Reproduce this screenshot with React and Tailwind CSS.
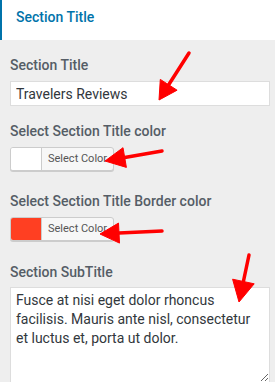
import React from 'react';

const arrows = [
  { tail: [189, 53], base: [168.7, 84.8], head: '159,100 177.1,90.2 160.3,79.4' },
  { tail: [162, 151], base: [124.7, 157.5], head: '105,161 126.4,167.4 123,147.7' },
  { tail: [162, 231], base: [119, 233.1], head: '100,234 119.5,243.1 118.5,223.1' },
  { tail: [249, 255], base: [243.4, 281.5], head: '239,302 254.2,283.8 232.6,279.2' },
];

function ColorButton({ swatch }) {
  return (
    <button
      type="button"
      className="flex h-[24px] w-[104px] items-stretch overflow-hidden rounded-[3px] border border-[#cccccc] bg-[#f7f7f7] shadow-[0_1px_0_#cccccc]"
    >
      <span className={`w-[31px] border-r border-[#cccccc] ${swatch}`} />
      <span className="flex flex-1 items-center pl-[6px] text-[11px] text-[#555555]">Select Color</span>
    </button>
  );
}

function Label({ children }) {
  return <p className="text-[14px] leading-[20px] font-medium text-[#555d66]">{children}</p>;
}

export default function App() {
  return (
    <div className="relative h-[382px] w-[275px] overflow-hidden bg-[#eeeeee] font-['Roboto',sans-serif]">
      {/* Section header */}
      <div className="h-[40px] border-l-2 border-[#0073aa] bg-white pl-[14px] pt-[7px]">
        <h3 className="text-[14px] leading-[20px] font-medium text-[#0073aa]">Section Title</h3>
      </div>

      <div className="pl-[10px] pr-[5px] pt-[15px]">
        <Label>Section Title</Label>
        <input
          type="text"
          defaultValue="Travelers Reviews"
          className="mt-[6px] block h-[25px] w-full border border-[#dddddd] bg-white px-[5px] text-[14px] text-[#32373c] outline-none"
        />

        <div className="mt-[15px]">
          <Label>Select Section Title color</Label>
          <div className="mt-[6px]">
            <ColorButton swatch="bg-white" />
          </div>
        </div>

        <div className="mt-[20px]">
          <Label>Select Section Title Border color</Label>
          <div className="mt-[6px]">
            <ColorButton swatch="bg-[#ff3f22]" />
          </div>
        </div>

        <div className="mt-[21px]">
          <Label>Section SubTitle</Label>
          <textarea
            defaultValue="Fusce at nisi eget dolor rhoncus facilisis. Mauris ante nisl, consectetur et luctus et, porta ut dolor."
            className="mt-[5px] block h-[96px] w-full resize-y border border-[#dddddd] bg-white px-[5px] py-[3px] text-[14px] leading-[19px] text-[#32373c] outline-none"
          />
        </div>
      </div>

      {/* Annotation arrows */}
      <svg className="pointer-events-none absolute inset-0" width="275" height="382" viewBox="0 0 275 382">
        {arrows.map((a, i) => (
          <g key={i} fill="#ff0000" stroke="#ff0000">
            <line x1={a.tail[0]} y1={a.tail[1]} x2={a.base[0]} y2={a.base[1]} strokeWidth="3.5" strokeLinecap="round" />
            <polygon points={a.head} strokeWidth="1" strokeLinejoin="miter" />
          </g>
        ))}
      </svg>
    </div>
  );
}
